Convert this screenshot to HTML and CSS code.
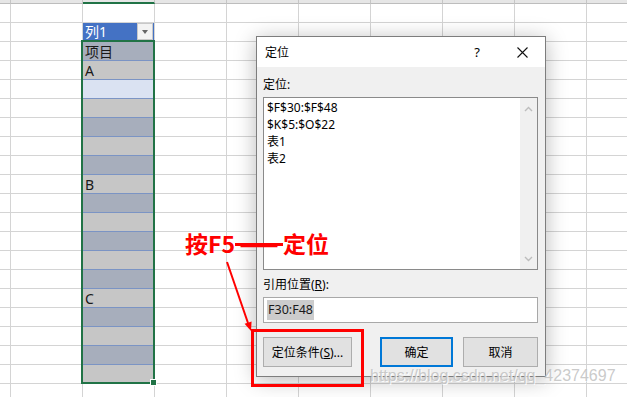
FILE: index.html
```html
<!DOCTYPE html>
<html lang="zh-CN">
	<head>
		<meta charset="UTF-8">
		<title>定位</title>
		<link rel="stylesheet" href="styles.css">
	</head>
	<body>
		<div class="sheet">
			<div class="col-head">
				<span class="hcell first"></span>
				<span class="hcell"></span>
				<span class="hcell active"></span>
				<span class="hcell"></span>
				<span class="hcell"></span>
				<span class="hcell"></span>
				<span class="hcell"></span>
				<span class="hcell"></span>
				<span class="hcell"></span>
				<span class="hcell"></span>
			</div>

			<div class="tbl">
				<div class="tbl-head">
					<span>列1</span>
					<span class="filter-btn"></span>
				</div>
				<div class="row band">项目</div>
				<div class="row">A</div>
				<div class="row current"></div>
				<div class="row"></div>
				<div class="row band"></div>
				<div class="row"></div>
				<div class="row band"></div>
				<div class="row">B</div>
				<div class="row band"></div>
				<div class="row"></div>
				<div class="row band"></div>
				<div class="row"></div>
				<div class="row band"></div>
				<div class="row">C</div>
				<div class="row band"></div>
				<div class="row"></div>
				<div class="row band"></div>
				<div class="row"></div>
			</div>
			<div class="sel-frame"></div>
			<div class="fill-handle"></div>

			<div class="dlg">
				<div class="dlg-title">
					<span class="dlg-name">定位</span>
					<span class="dlg-help">?</span>
					<span class="dlg-close">
						<svg width="11" height="11" viewBox="0 0 11 11"><path d="M0.5 0.5L10.5 10.5M10.5 0.5L0.5 10.5" stroke="#111" stroke-width="1.1" fill="none"/></svg>
					</span>
				</div>
				<div class="dlg-body">
					<div class="lbl">定位:</div>
					<div class="listbox">
						<div class="list-items">
							<div>$F$30:$F$48</div>
							<div>$K$5:$O$22</div>
							<div>表1</div>
							<div>表2</div>
						</div>
						<div class="vscroll">
							<svg width="9" height="6" viewBox="0 0 9 6"><path d="M1 5L4.5 1.5L8 5" stroke="#bdbdbd" stroke-width="1.4" fill="none"/></svg>
							<svg width="9" height="6" viewBox="0 0 9 6"><path d="M1 1L4.5 4.5L8 1" stroke="#bdbdbd" stroke-width="1.4" fill="none"/></svg>
						</div>
					</div>
					<div class="lbl lbl-ref">引用位置(<u>R</u>):</div>
					<div class="ref-input"><span class="ref-sel">F30:F48</span></div>
					<div class="btn-row">
						<span class="btn btn-cond">定位条件(<u>S</u>)...</span>
						<span class="btn btn-ok">确定</span>
						<span class="btn btn-cancel">取消</span>
					</div>
				</div>
			</div>

			<div class="note">按F5<span class="dash">——</span>定位</div>
			<svg class="arrow" width="627" height="397" viewBox="0 0 627 397">
				<line x1="227" y1="262" x2="248" y2="323" stroke="#ff0000" stroke-width="2"/>
				<polygon points="251,331 251.6,321.4 244.6,323.8" fill="#ff0000"/>
			</svg>
			<div class="note-box"></div>

			<div class="watermark">https://blog.csdn.net/qq_42374697</div>
		</div>
	</body>
</html>
```

FILE: styles.css
```css
* {
	box-sizing: border-box;
}

body {
	margin: 0;
	background-color: #ffffff;
	font-family: "Noto Sans", "Noto Sans CJK SC", sans-serif;
	color: #000;
}

.sheet {
	position: relative;
	width: 627px;
	height: 397px;
	overflow: hidden;
	background-color: #ffffff;
	background-image:
		linear-gradient(to right, #d4d4d4 1px, transparent 1px),
		linear-gradient(to bottom, #d4d4d4 1px, transparent 1px);
	background-size: 72px 19px;
	background-position: 10px 3px;
}

/* column header strip at the very top */
.col-head {
	display: flex;
	height: 4px;
}

.hcell {
	flex: none;
	width: 72px;
	height: 4px;
	background-color: #e6e6e6;
	border-right: 1px solid #c6c6c6;
	border-bottom: 1px solid #bdbdbd;
}

.hcell.first {
	width: 11px;
}

.hcell.active {
	border-bottom: 2px solid #217346;
}

/* excel table */
.tbl {
	position: absolute;
	left: 83px;
	top: 23px;
	width: 71px;
	font-size: 14px;
	color: #1a1a1a;
}

.tbl-head {
	position: relative;
	height: 19px;
	padding-left: 2px;
	line-height: 17px;
	background-color: #4472c4;
	color: #ffffff;
}

.filter-btn {
	position: absolute;
	right: 1px;
	top: 0;
	width: 16px;
	height: 17px;
	background-color: #f3f3f3;
	border: 1px solid #c8c8c8;
}

.filter-btn:before {
	content: "";
	position: absolute;
	left: 4px;
	top: 6px;
	border-left: 3.5px solid transparent;
	border-right: 3.5px solid transparent;
	border-top: 4px solid #666;
}

.row {
	height: 19px;
	padding: 1px 0 0 2px;
	line-height: 17px;
	background-color: #c6c6c6;
	border-bottom: 1px solid #7b94c4;
}

.row.band {
	background-color: #a7aebc;
}

.row.current {
	background-color: #dae2f2;
}

.sel-frame {
	position: absolute;
	left: 81px;
	top: 40px;
	width: 74px;
	height: 344px;
	border: 2px solid #217346;
}

.fill-handle {
	position: absolute;
	left: 150px;
	top: 379px;
	width: 7px;
	height: 7px;
	background-color: #217346;
	border: 1px solid #ffffff;
}

/* goto dialog */
.dlg {
	position: absolute;
	left: 256px;
	top: 36px;
	width: 290px;
	height: 341px;
	background-color: #f0f0f0;
	border: 1px solid #7d7d7d;
	box-shadow: 0 3px 20px rgba(0, 0, 0, 0.28);
	font-size: 12px;
}

.dlg-title {
	display: flex;
	align-items: center;
	height: 30px;
	padding-left: 8px;
	background-color: #ffffff;
}

.dlg-name {
	flex: 1;
}

.dlg-help {
	width: 46px;
	text-align: center;
	font-size: 13px;
}

.dlg-close {
	display: flex;
	align-items: center;
	justify-content: center;
	width: 45px;
	height: 30px;
}

.dlg-body {
	padding: 9px 7px 9px 6px;
}

.lbl {
	height: 17px;
	line-height: 17px;
}

.listbox {
	display: flex;
	height: 173px;
	margin-top: 4px;
	background-color: #ffffff;
	border: 1px solid #8a8a8a;
}

.list-items {
	flex: 1;
	padding: 1px 0 0 3px;
	line-height: 17px;
}

.vscroll {
	display: flex;
	flex-direction: column;
	justify-content: space-between;
	align-items: center;
	width: 17px;
	padding: 8px 0 7px;
	background-color: #f0f0f0;
}

.lbl-ref {
	margin-top: 6px;
}

.ref-input {
	height: 26px;
	margin-top: 4px;
	padding: 2px 0 0 3px;
	background-color: #ffffff;
	border: 1px solid #a8a8a8;
}

.ref-sel {
	display: inline-block;
	height: 20px;
	line-height: 20px;
	padding: 0 1px;
	background-color: #cccccc;
	color: #1a1a1a;
	font-size: 12.5px;
}

.btn-row {
	display: flex;
	margin-top: 14px;
}

.btn {
	display: flex;
	align-items: center;
	justify-content: center;
	height: 30px;
	background-color: #e1e1e1;
	border: 1px solid #adadad;
}

.btn-cond {
	width: 89px;
}

.btn-ok {
	width: 73px;
	margin-left: auto;
	border: 2px solid #0078d7;
}

.btn-cancel {
	width: 75px;
	margin-left: 10px;
}

/* red annotations */
.note {
	position: absolute;
	left: 185px;
	top: 232px;
	font-family: "Noto Sans CJK SC", sans-serif;
	font-size: 23px;
	font-weight: 700;
	line-height: 23px;
	color: #ff0000;
	white-space: nowrap;
}

.note .dash {
	position: relative;
	display: inline-block;
	width: 48px;
	text-align: center;
}

.note .dash:after {
	content: "";
	position: absolute;
	left: 0;
	right: 0;
	top: 11px;
	height: 3px;
	background-color: #ff0000;
}

.arrow {
	position: absolute;
	left: 0;
	top: 0;
}

.note-box {
	position: absolute;
	left: 251px;
	top: 329px;
	width: 113px;
	height: 58px;
	border: 3px solid #ff0000;
}

.watermark {
	position: absolute;
	left: 370px;
	top: 367px;
	font-family: "Liberation Sans", sans-serif;
	font-size: 16px;
	line-height: 18px;
	color: rgba(196, 196, 196, 0.9);
	text-shadow: 1px 1px 0 rgba(255, 255, 255, 0.9);
	white-space: nowrap;
}
```
